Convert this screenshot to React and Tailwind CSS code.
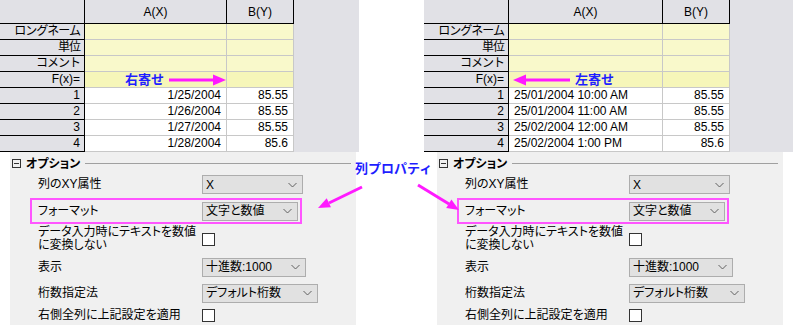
import React from 'react';

const FONT = "font-['Liberation_Sans','Noto_Sans_CJK_JP',sans-serif]";

const leftRows = [
  ['1', '1/25/2004', '85.55'],
  ['2', '1/26/2004', '85.55'],
  ['3', '1/27/2004', '85.55'],
  ['4', '1/28/2004', '85.6'],
];

const rightRows = [
  ['1', '25/01/2004 10:00 AM', '85.55'],
  ['2', '25/01/2004 11:00 AM', '85.55'],
  ['3', '25/02/2004 12:00 AM', '85.55'],
  ['4', '25/02/2004 1:00 PM', '85.6'],
];

const HArrow = ({ left }) => (
  <svg width="57" height="12" viewBox="0 0 57 12" className="shrink-0">
    {left ? (
      <>
        <line x1="12" y1="6" x2="57" y2="6" stroke="#ff1aff" strokeWidth="3" />
        <polygon points="0,6 13,0.5 13,11.5" fill="#ff1aff" />
      </>
    ) : (
      <>
        <line x1="0" y1="6" x2="45" y2="6" stroke="#ff1aff" strokeWidth="3" />
        <polygon points="57,6 44,0.5 44,11.5" fill="#ff1aff" />
      </>
    )}
  </svg>
);

const Label = ({ children, jp }) => (
  <div
    className={`h-full w-[85px] shrink-0 border-r border-b border-black bg-[#e1e1e6] pr-[4px] text-right leading-[15px] ${
      jp ? 'tracking-[-1px]' : ''
    }`}
  >
    {children}
  </div>
);

const Sheet = ({ aWidth, rows, alignA, note }) => (
  <div className="flex h-[152px] text-[12px] text-black">
    <div className="flex flex-col">
      <div className="flex h-[24px]">
        <div className="h-full w-[85px] border-r border-b border-black bg-[#e1e1e6]" />
        <div className={`${aWidth} flex h-full items-center justify-center border-r border-b border-black bg-[#e1e1e6]`}>
          A(X)
        </div>
        <div className="flex h-full w-[67px] items-center justify-center border-r border-b border-black bg-[#e1e1e6]">
          B(Y)
        </div>
      </div>
      {['ロングネーム', '単位', 'コメント'].map((l) => (
        <div key={l} className="flex h-[16px]">
          <Label jp>{l}</Label>
          <div className={`${aWidth} h-full border-r border-b border-[#c8c8c8] bg-[#f9f9cb]`} />
          <div className="h-full w-[67px] border-r border-b border-[#c8c8c8] bg-[#f9f9cb]" />
        </div>
      ))}
      <div className="flex h-[16px]">
        <Label>F(x)=</Label>
        <div className={`${aWidth} h-full border-r border-b border-[#c8c8c8] bg-[#f6f6b9]`}>{note}</div>
        <div className="h-full w-[67px] border-r border-b border-[#c8c8c8] bg-[#f6f6b9]" />
      </div>
      {rows.map(([n, a, b]) => (
        <div key={n} className="flex h-[16px]">
          <Label>{n}</Label>
          <div className={`${aWidth} ${alignA} h-full border-r border-b border-[#c8c8c8] bg-white px-[5px] leading-[15px] whitespace-nowrap`}>
            {a}
          </div>
          <div className="h-full w-[67px] border-r border-b border-[#c8c8c8] bg-white pr-[5px] text-right leading-[15px]">
            {b}
          </div>
        </div>
      ))}
    </div>
    <div className="flex-1 bg-[#e1e1e6]" />
  </div>
);

const Select = ({ w, children }) => (
  <div className={`${w} flex h-[19px] shrink-0 items-center justify-between border border-[#adadad] bg-[#e1e1e1] pr-[5px] pl-[3px] leading-none`}>
    <span className="whitespace-nowrap">{children}</span>
    <svg width="9" height="6" viewBox="0 0 9 6">
      <polyline points="0.5,1 4.5,5 8.5,1" fill="none" stroke="#606060" strokeWidth="1" />
    </svg>
  </div>
);

const Check = () => <div className="h-[13px] w-[13px] shrink-0 border border-[#333] bg-white" />;

const Row = ({ label, className, children }) => (
  <div className={`ml-[28px] flex items-center ${className}`}>
    <div className="w-[164px] shrink-0 leading-[13px]">{label}</div>
    {children}
  </div>
);

const Panel = () => (
  <div className="flex h-full flex-col bg-[#f0f0f0] text-[12px] text-black [font-feature-settings:'palt']">
    <div className="flex h-[23px] shrink-0 items-center pr-[5px] pl-[2px]">
      <div className="flex h-[9px] w-[9px] items-center justify-center border border-[#333]">
        <div className="h-px w-[5px] bg-[#333]" />
      </div>
      <span className="ml-[5px] font-bold">オプション</span>
      <span className="ml-[5px] h-px flex-1 bg-[#a0a0a0]" />
    </div>
    <Row label="列のXY属性" className="h-[19px]">
      <Select w="w-[101px]">X</Select>
    </Row>
    <div className="mt-[4px] ml-[20px] flex h-[26px] w-[272px] items-center border-2 border-[#ff55ff]">
      <div className="w-[170px] shrink-0 pl-[6px]">フォーマット</div>
      <Select w="w-[96px]">文字と数値</Select>
    </div>
    <Row
      label={
        <>
          データ入力時にテキストを数値
          <br />
          に変換しない
        </>
      }
      className="mt-[2px] h-[26px]"
    >
      <Check />
    </Row>
    <Row label="表示" className="mt-[5px] h-[20px]">
      <Select w="w-[104px]">十進数:1000</Select>
    </Row>
    <Row label="桁数指定法" className="mt-[6px] h-[20px]">
      <Select w="w-[116px]">デフォルト桁数</Select>
    </Row>
    <Row label="右側全列に上記設定を適用" className="mt-[4px] h-[17px]">
      <Check />
    </Row>
  </div>
);

export default function App() {
  return (
    <div className={`relative h-[325px] w-[793px] overflow-hidden bg-white ${FONT}`}>
      <div className="flex h-full">
        <div className="flex w-[359px] flex-col">
          <Sheet
            aWidth="w-[142px]"
            rows={leftRows}
            alignA="text-right"
            note={
              <div className="flex h-full items-center gap-[5px] pl-[40px]">
                <span className="text-[13px] leading-none font-bold text-[#1e1eff]">右寄せ</span>
                <HArrow />
              </div>
            }
          />
          <div className="flex-1 pr-[3px] pl-[10px]">
            <Panel />
          </div>
        </div>
        <div className="w-[65px]" />
        <div className="flex w-[369px] flex-col">
          <Sheet
            aWidth="w-[154px]"
            rows={rightRows}
            alignA="text-left"
            note={
              <div className="flex h-full items-center gap-[5px] pl-[4px]">
                <HArrow left />
                <span className="text-[13px] leading-none font-bold text-[#1e1eff]">左寄せ</span>
              </div>
            }
          />
          <div className="flex-1 pr-[10px] pl-[13px]">
            <Panel />
          </div>
        </div>
      </div>

      <div className="absolute top-[162px] left-[355px] text-[13px] leading-none font-bold whitespace-nowrap text-[#1e1eff]">
        列プロパティ
      </div>
      <svg className="pointer-events-none absolute inset-0" width="793" height="325">
        <line x1="362" y1="187" x2="329" y2="203" stroke="#ff1aff" strokeWidth="3" />
        <polygon points="318,208 331,207.3 326.7,198.3" fill="#ff1aff" />
        <line x1="418" y1="185" x2="449" y2="204" stroke="#ff1aff" strokeWidth="3" />
        <polygon points="459,210 446.2,208 451.4,199.4" fill="#ff1aff" />
      </svg>
    </div>
  );
}
